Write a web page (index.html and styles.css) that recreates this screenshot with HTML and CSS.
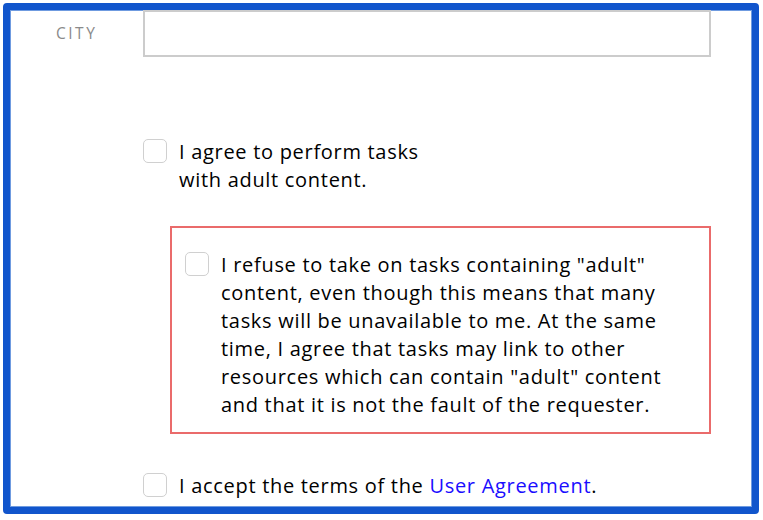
FILE: index.html
```html
<!DOCTYPE html>
<html lang="en">
<head>
<meta charset="utf-8">
<title>Registration</title>
<link rel="stylesheet" href="styles.css">
</head>
<body>
<div class="frame">
  <div class="content">
    <div class="field-row">
      <label class="field-label" for="city">City</label>
      <input class="field-input" id="city" type="text">
    </div>

    <label class="check-row adult-row">
      <span class="checkbox"></span>
      <span class="check-text">I agree to perform tasks<br>with adult content.</span>
    </label>

    <div class="warning">
      <label class="check-row">
        <span class="checkbox"></span>
        <span class="check-text">I refuse to take on tasks containing "adult"<br>content, even though this means that many<br>tasks will be unavailable to me. At the same<br>time, I agree that tasks may link to other<br>resources which can contain "adult" content<br>and that it is not the fault of the requester.</span>
      </label>
    </div>

    <label class="check-row terms-row">
      <span class="checkbox"></span>
      <span class="check-text">I accept the terms of the <a class="link" href="#">User Agreement</a>.</span>
    </label>
  </div>
</div>
</body>
</html>
```

FILE: styles.css
```css
html, body {
  margin: 0;
  padding: 0;
  background: #ffffff;
}

body {
  padding: 3px 4px 6px 3px;
  font-family: "Open Sans", "Noto Sans", sans-serif;
  color: #000000;
}

.frame {
  height: 497px;
  border: 7px solid #1155cc;
  border-radius: 4px;
  overflow: hidden;
  background: #ffffff;
  box-shadow: inset 0 0 0 1px #6f9be0;
}

.content {
  padding-left: 133px;
  padding-right: 41px;
}

.field-row {
  display: flex;
  align-items: center;
  margin-left: -133px;
}

.field-label {
  width: 133px;
  box-sizing: border-box;
  padding-left: 46px;
  padding-bottom: 1px;
  font-size: 15.5px;
  letter-spacing: 2.5px;
  text-transform: uppercase;
  color: #8a8a8a;
}

.field-input {
  flex: 1;
  height: 47px;
  box-sizing: border-box;
  margin: 0;
  border: 2px solid #cccccc;
  background: #ffffff;
  outline: none;
}

.check-row {
  display: flex;
  align-items: flex-start;
  gap: 12px;
  font-size: 20px;
  letter-spacing: 0.7px;
  line-height: 28px;
}

.checkbox {
  flex: none;
  width: 24px;
  height: 24px;
  margin-top: 1px;
  box-sizing: border-box;
  border: 1.5px solid #d0d0d0;
  border-radius: 5px;
  background: #ffffff;
}

.check-text {
  white-space: nowrap;
}

.adult-row {
  margin-top: 81px;
}

.warning {
  margin-top: 32px;
  margin-left: 27px;
  border: 2px solid #ea6b6b;
  padding: 23px 13px 13px 13px;
}

.terms-row {
  margin-top: 38px;
}

.link {
  color: #1a0dff;
  text-decoration: none;
}
```
